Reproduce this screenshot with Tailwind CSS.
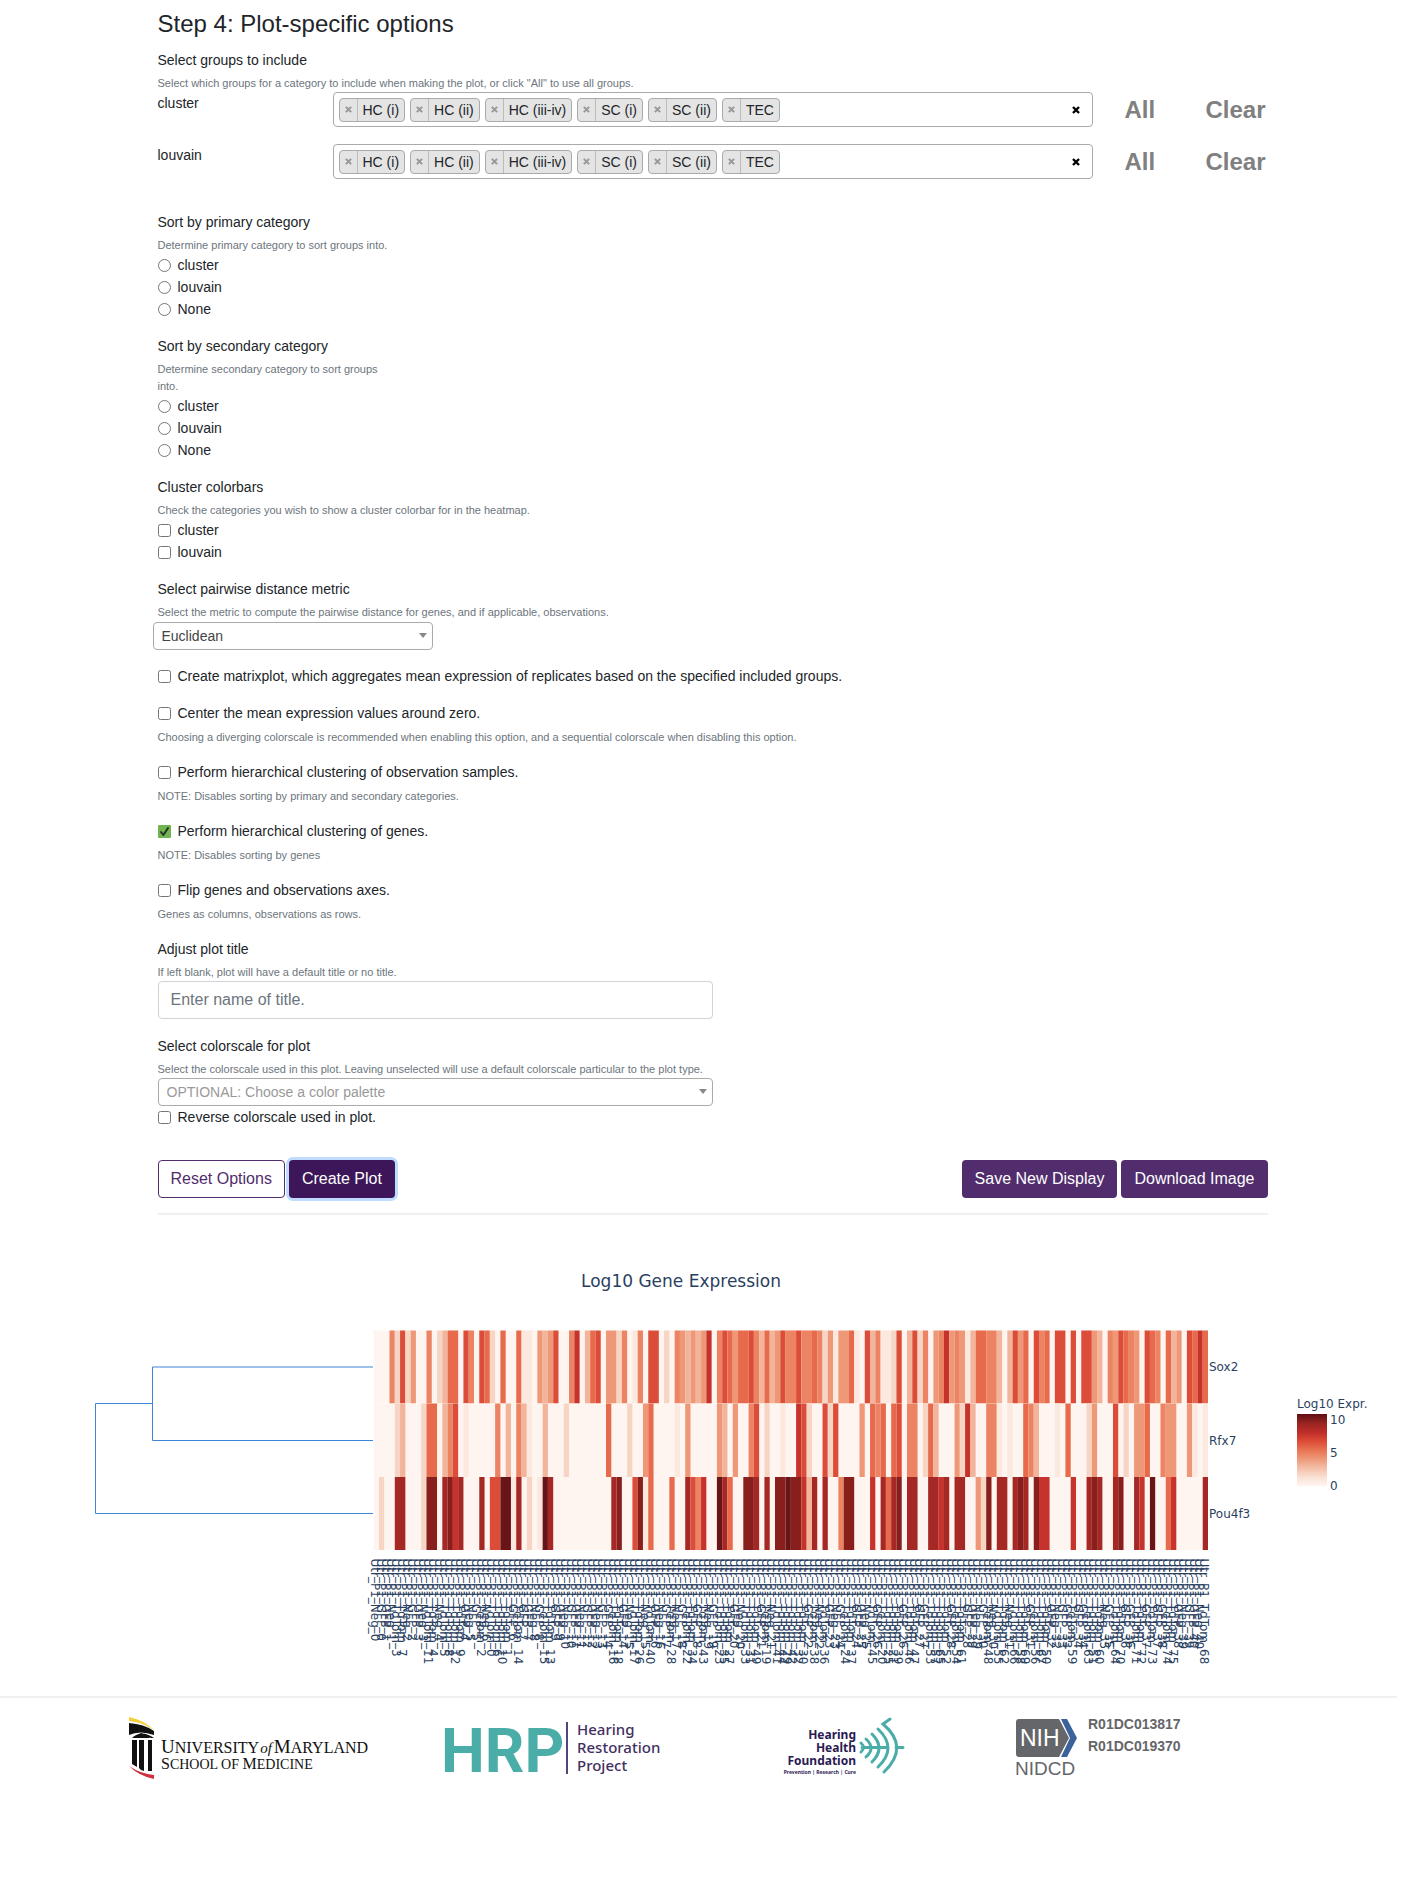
<!DOCTYPE html>
<html lang="en">
<head>
<meta charset="utf-8">
<title>Plot-specific options</title>
<script src="https://cdn.jsdelivr.net/npm/@tailwindcss/browser@4"></script>
</head>
<body class="bg-white font-['Liberation_Sans',Arial,sans-serif] text-[14px] leading-[22px] text-[#212529]">
<main>
  <form class="mx-auto w-full max-w-[1110px]">
    <h1 class="pt-[10px] text-[24px] leading-[28px]">Step 4: Plot-specific options</h1>

    <section class="mt-[11px]">
      <h2>Select groups to include</h2>
      <p class="mt-1 text-[11px] leading-[17px] text-[#6c757d]">Select which groups for a category to include when making the plot, or click "All" to use all groups.</p>
      <div id="groups" class="flex flex-col gap-[17px]"></div>
    </section>

    <fieldset class="mt-8">
      <legend>Sort by primary category</legend>
      <p class="mt-1 text-[11px] leading-[17px] text-[#6c757d]">Determine primary category to sort groups into.</p>
      <label class="flex items-center gap-[7px]"><input type="radio" name="primary" class="m-0 size-[13px]">cluster</label>
      <label class="flex items-center gap-[7px]"><input type="radio" name="primary" class="m-0 size-[13px]">louvain</label>
      <label class="flex items-center gap-[7px]"><input type="radio" name="primary" class="m-0 size-[13px]">None</label>
    </fieldset>

    <fieldset class="mt-[15px]">
      <legend>Sort by secondary category</legend>
      <p class="mt-1 w-[248px] text-[11px] leading-[17px] text-[#6c757d]">Determine secondary category to sort groups<br>into.</p>
      <label class="flex items-center gap-[7px]"><input type="radio" name="secondary" class="m-0 size-[13px]">cluster</label>
      <label class="flex items-center gap-[7px]"><input type="radio" name="secondary" class="m-0 size-[13px]">louvain</label>
      <label class="flex items-center gap-[7px]"><input type="radio" name="secondary" class="m-0 size-[13px]">None</label>
    </fieldset>

    <fieldset class="mt-[15px]">
      <legend>Cluster colorbars</legend>
      <p class="mt-1 text-[11px] leading-[17px] text-[#6c757d]">Check the categories you wish to show a cluster colorbar for in the heatmap.</p>
      <label class="flex items-center gap-[7px]"><input type="checkbox" class="m-0 size-[13px]">cluster</label>
      <label class="flex items-center gap-[7px]"><input type="checkbox" class="m-0 size-[13px]">louvain</label>
    </fieldset>

    <section class="mt-[15px]">
      <label for="metric" class="block">Select pairwise distance metric</label>
      <p class="mt-1 text-[11px] leading-[17px] text-[#6c757d]">Select the metric to compute the pairwise distance for genes, and if applicable, observations.</p>
      <div class="relative mt-px -ml-[5px] w-[280px]">
        <select id="metric" class="block h-7 w-full appearance-none rounded border border-[#aaa] bg-white px-2 text-[#444]"><option>Euclidean</option></select>
        <svg class="pointer-events-none absolute top-[11px] right-[6px] h-[5px] w-2" viewBox="0 0 8 5"><path d="M0 0h8L4 5z" fill="#888"/></svg>
      </div>
    </section>

    <label class="mt-[15px] flex items-center gap-[7px]"><input type="checkbox" class="m-0 size-[13px]">Create matrixplot, which aggregates mean expression of replicates based on the specified included groups.</label>

    <section class="mt-[15px]">
      <label class="flex items-center gap-[7px]"><input type="checkbox" class="m-0 size-[13px]">Center the mean expression values around zero.</label>
      <p class="mt-[5px] text-[11px] leading-[17px] text-[#6c757d]">Choosing a diverging colorscale is recommended when enabling this option, and a sequential colorscale when disabling this option.</p>
    </section>
    <section class="mt-[15px]">
      <label class="flex items-center gap-[7px]"><input type="checkbox" class="m-0 size-[13px]">Perform hierarchical clustering of observation samples.</label>
      <p class="mt-[5px] text-[11px] leading-[17px] text-[#6c757d]">NOTE: Disables sorting by primary and secondary categories.</p>
    </section>
    <section class="mt-[15px]">
      <label class="flex items-center gap-[7px]">
        <span class="relative size-[13px]">
          <input type="checkbox" checked class="m-0 block size-[13px] appearance-none rounded-[1px] bg-[#70b452]">
          <svg class="pointer-events-none absolute inset-0 size-[13px]" viewBox="0 0 13 13" fill="none" stroke="#263322" stroke-width="2" stroke-linecap="round" stroke-linejoin="round"><path d="M3 7l2.4 3L10 3"/></svg>
        </span>Perform hierarchical clustering of genes.</label>
      <p class="mt-[5px] text-[11px] leading-[17px] text-[#6c757d]">NOTE: Disables sorting by genes</p>
    </section>
    <section class="mt-[15px]">
      <label class="flex items-center gap-[7px]"><input type="checkbox" class="m-0 size-[13px]">Flip genes and observations axes.</label>
      <p class="mt-[5px] text-[11px] leading-[17px] text-[#6c757d]">Genes as columns, observations as rows.</p>
    </section>

    <section class="mt-[15px]">
      <label for="title" class="block">Adjust plot title</label>
      <p class="mt-1 text-[11px] leading-[17px] text-[#6c757d]">If left blank, plot will have a default title or no title.</p>
      <input id="title" type="text" placeholder="Enter name of title." class="block h-[38px] w-1/2 rounded border border-[#ced4da] px-3 text-[16px] placeholder:text-[#6c757d]">
    </section>

    <section class="mt-4">
      <label for="palette" class="block">Select colorscale for plot</label>
      <p class="mt-1 text-[11px] leading-[17px] text-[#6c757d]">Select the colorscale used in this plot. Leaving unselected will use a default colorscale particular to the plot type.</p>
      <div class="relative w-1/2">
        <select id="palette" class="block h-7 w-full appearance-none rounded border border-[#aaa] bg-white px-2 text-[#999]"><option>OPTIONAL: Choose a color palette</option></select>
        <svg class="pointer-events-none absolute top-[11px] right-[6px] h-[5px] w-2" viewBox="0 0 8 5"><path d="M0 0h8L4 5z" fill="#888"/></svg>
      </div>
      <label class="flex items-center gap-[7px]"><input type="checkbox" class="m-0 size-[13px]">Reverse colorscale used in plot.</label>
    </section>

    <div class="mt-8 flex gap-1 text-[16px]">
      <button type="button" class="h-[38px] rounded border border-[#512d6d] bg-white px-3 text-[#512d6d]">Reset Options</button>
      <button type="button" class="h-[38px] rounded bg-[#3c1659] px-[13px] text-white ring-3 ring-[#bfdbff]">Create Plot</button>
      <button type="button" class="ml-auto h-[38px] rounded bg-[#512d6d] px-[13px] text-white">Save New Display</button>
      <button type="button" class="h-[38px] rounded bg-[#512d6d] px-[13px] text-white">Download Image</button>
    </div>
    <hr class="mt-[15px] h-[2px] border-0 bg-[#f0f0f0]">
  </form>

  <svg id="plot" class="block w-full font-['DejaVu_Sans',Verdana,sans-serif]" viewBox="0 1215 1425 481" fill="#2a3f5f" font-size="12">
    <defs><linearGradient id="reds" x1="0" y1="1" x2="0" y2="0">
      <stop offset="0" stop-color="#fff5f0"/><stop offset=".125" stop-color="#f9e0d4"/><stop offset=".25" stop-color="#f3bea6"/><stop offset=".375" stop-color="#ee987a"/><stop offset=".5" stop-color="#e97353"/><stop offset=".625" stop-color="#dc4a37"/><stop offset=".75" stop-color="#bd2d28"/><stop offset=".875" stop-color="#982420"/><stop offset="1" stop-color="#5e1015"/>
    </linearGradient></defs>
    <text x="681" y="1287" font-size="17" text-anchor="middle">Log10 Gene Expression</text>
    <g fill="none" stroke="#3d85d8" stroke-width="1"><path d="M373 1367H152.500V1440.500H373"/><path d="M152 1403.500H95.500V1513.500H373"/></g>
    <g id="cells"></g>
    <g id="ticks"></g>
    <text x="1209" y="1371">Sox2</text><text x="1209" y="1445">Rfx7</text><text x="1209" y="1518">Pou4f3</text>
    <text x="1297" y="1408">Log10 Expr.</text>
    <rect x="1297" y="1414" width="30" height="72" fill="url(#reds)"/>
    <text x="1330" y="1424">10</text><text x="1330" y="1457">5</text><text x="1330" y="1490">0</text>
  </svg>
</main>

<footer>
  <hr class="mr-7 h-[2px] border-0 bg-[#f0f0f0]">
  <div class="grid grid-cols-[315fr_342fr_230fr_409fr] pt-[15px] pl-[129px]">
    <svg class="h-[72px] w-[250px]" viewBox="129 1714 250 72" role="img" aria-label="University of Maryland School of Medicine" font-family="Liberation Serif, serif" fill="#111">
      <path d="M129 1718q15 3 25 13q-12-8-25-9z" fill="#f5cf3c"/>
      <path d="M129 1724q15 1 25 8v4q-14-5-25 0z"/>
      <path d="M132 1739q9-9 22 0l-3 0q-9-4-16 0zM132 1739l9-5 9 5z"/>
      <path d="M132 1741h5v27l-5-3zM139 1741h5v31q-3 0-5-3zM148 1741h4v31h-4z"/>
      <path d="M129 1767q12 8 25 9v4q-15-3-25-13z" fill="#d2303c"/>
      <text x="161" y="1754" font-size="19">U<tspan font-size="16">NIVERSITY</tspan><tspan font-style="italic" font-size="15" dx="1">of</tspan><tspan dx="2">M</tspan><tspan font-size="16">ARYLAND</tspan></text>
      <text x="161" y="1770" font-size="16">S<tspan font-size="14">CHOOL OF </tspan>M<tspan font-size="14">EDICINE</tspan></text>
    </svg>
    <svg class="h-[72px] w-[230px] overflow-visible" viewBox="444 1714 230 72" role="img" aria-label="Hearing Restoration Project">
      <text x="441" y="1773" font-family="Roboto, sans-serif" font-weight="700" font-size="62" fill="#4aada8">HRP</text>
      <path d="M567 1723v52" stroke="#55447a" stroke-width="2"/>
      <g font-family="Noto Sans, sans-serif" font-weight="500" font-size="15" fill="#42305f"><text x="577" y="1736">Hearing</text><text x="577" y="1754">Restoration</text><text x="577" y="1772">Project</text></g>
    </svg>
    <svg class="h-[72px] w-[124px] overflow-visible" viewBox="786 1714 124 72" role="img" aria-label="Hearing Health Foundation">
      <g font-family="Noto Sans, sans-serif" font-weight="700" font-size="12" fill="#2b1a52" text-anchor="end"><text x="856" y="1740">Hearing</text><text x="856" y="1753">Health</text><text x="856" y="1766">Foundation</text><text x="856" y="1775" font-size="5">Prevention | Research | Cure</text></g>
      <g fill="none" stroke="#4aada8" stroke-width="3" stroke-linecap="round"><path d="M861 1744q5 4.500 0 9M866 1740q10 9 0 18M872 1735q14 14 0 28M878 1730q20 19 0 38M890 1720l-7 5q27 23 1 48M862 1748.500h26M896 1748.500h7"/></g>
    </svg>
    <div class="flex gap-[10px]">
      <svg class="h-[66px] w-[62px] shrink-0 overflow-visible" viewBox="1017 1714 62 66" role="img" aria-label="NIH NIDCD" font-family="Liberation Sans, Arial, sans-serif">
        <path d="M1020 1720h40l10 19-10 19h-40q-3 0-3-3v-32q0-3 3-3z" fill="#65666a"/>
        <path d="M1062 1720h6l10 19-10 19h-6l9-19z" fill="#3c629b"/>
        <text x="1021" y="1747" font-size="23" fill="#fff">NIH</text>
        <text x="1016" y="1776" font-size="19" fill="#65666a">NIDCD</text>
      </svg>
      <p class="text-[14px] font-bold text-[#65666a]">R01DC013817<br>R01DC019370</p>
    </div>
  </div>
</footer>

<script>
const groups = ['HC (i)', 'HC (ii)', 'HC (iii-iv)', 'SC (i)', 'SC (ii)', 'TEC'];
const cross = (size, color) => `<svg class="${size}" viewBox="0 0 8 8" fill="none" stroke="${color}" stroke-width="2.400"><path d="M1 1l6 6M7 1L1 7"/></svg>`;
document.getElementById('groups').innerHTML = ['cluster', 'louvain'].map(name => `
  <div class="flex">
    <span class="w-[175px]">${name}</span>
    <div class="flex h-[35px] w-[760px] items-center gap-[5px] rounded border border-[#aaa] px-[5px]" role="group" aria-label="${name}">
      ${groups.map(g => `<span class="flex h-6 items-center rounded border border-[#aaa] bg-[#e4e4e4]"><button type="button" aria-label="Remove ${g}" class="flex h-full w-[18px] items-center justify-center border-r border-[#bbb]">${cross('size-[7px]', '#999')}</button><span class="px-[5px]">${g}</span></span>`).join('')}
      <button type="button" aria-label="Remove all" class="mr-[7px] ml-auto">${cross('size-2', '#000')}</button>
    </div>
    <button type="button" class="ml-8 text-[24px] font-bold text-[#808080]">All</button>
    <button type="button" class="mr-[2px] ml-auto text-[24px] font-bold text-[#808080]">Clear</button>
  </div>`).join('');

// Expression levels 0-B per sample, written as runs of "start:levels"; gaps are 0.
const palette = {0:'#fff5f0',1:'#fbe8de',2:'#f7d5c4',3:'#f2b59b',4:'#ef9878',5:'#ec8464',6:'#e86a4c',7:'#dc4d39',8:'#c5332c',9:'#a62824',A:'#881f1c',B:'#691416'};
const expand = (runs) => {
  const row = Array(158).fill('0');
  runs.split(' ').forEach(run => { const [start, levels] = run.split(':'); [...levels].forEach((c, k) => row[+start + k] = c); });
  return row;
};
const rows = [
  expand('3:52724 10:5 12:2366 17:75 20:762 24:6 27:611 31:4347 37:58 40:367 44:4425 49:15 52:77 55:2 57:5434348 65:576466753634755 80:7556524144 90:61 93:735112 99:7 101:3725 106:45845413 114:66553 120:3746 125:756 129:77 132:7 134:7743 139:547654 146:765 150:634 154:7686'),
  expand('4:23 9:2 10:66 13:357 17:1 23:5 25:3 27:531 32:3 36:2 44:6 48:2 51:46 57:1 59:4 65:43 68:4 71:57 74:2 77:1 80:872 85:727 92:4 94:656 98:67 101:55 104:263 110:4283 116:551 120:1 123:653 129:1 131:6 135:24 140:7 142:2 144:446 149:544 154:41 157:1'),
  expand('1:2 4:99 9:2AA 13:9A89 20:9 22:77BB19 29:2 31:1B9 45:9A 49:7A16 56:6 59:9758 65:B96 70:AA9 74:9 76:AABAA839 85:9 88:5AA 94:8 96:969A 101:99 105:9989 110:99 114:42A 118:99 121:9A9 125:A88 132:8 135:9A9 140:9A 144:98 147:B 150:68 157:9')
];
const x0 = 373.667, step = 834.333 / 158, ys = [1330.5, 1403.5, 1477, 1550];
document.getElementById('cells').innerHTML = rows.map((row, r) => {
  const height = ys[r + 1] - ys[r];
  let out = `<rect x="${x0}" y="${ys[r]}" width="834.333" height="${height}" fill="${palette[0]}"/>`;
  for (let i = 0; i < row.length; i++) {
    if (row[i] === '0') continue;
    let end = i;
    while (row[end + 1] === row[i]) end++;
    out += `<rect x="${x0 + i * step}" y="${ys[r]}" width="${(end - i + 1) * step}" height="${height}" fill="${palette[row[i]]}"/>`;
    i = end;
  }
  return out;
}).join('');

const tomato = [3,7,11,4,5,8,12,9,2,0,6,10,1,14,15,13,16,18,17,26,40,28,22,34,43,23,35,27,33,31,49,19,41,44,29,42,32,30,38,36,24,37,45,20,25,21,39,46,47,53,57,65,52,54,61,48,55,62,66,58,69,56,67,50,59,63,51,60,64,70,71,72,73,74,75,76,77,78,79];
let t = 0, n = 0;
document.getElementById('ticks').innerHTML = rows[2].map((c, i) => {
  const label = i === 157 ? 'TdTom_68' : '6789AB'.includes(c) ? 'TdTom_' + tomato[t++ % tomato.length] : (i % 3 ? 'GFP_' : 'Neg_') + (n++ >> 1);
  return `<text transform="translate(${371.300 + i * step} 1558.500) rotate(90)">Utr_P1_${label}</text>`;
}).join('');
</script>
</body>
</html>
